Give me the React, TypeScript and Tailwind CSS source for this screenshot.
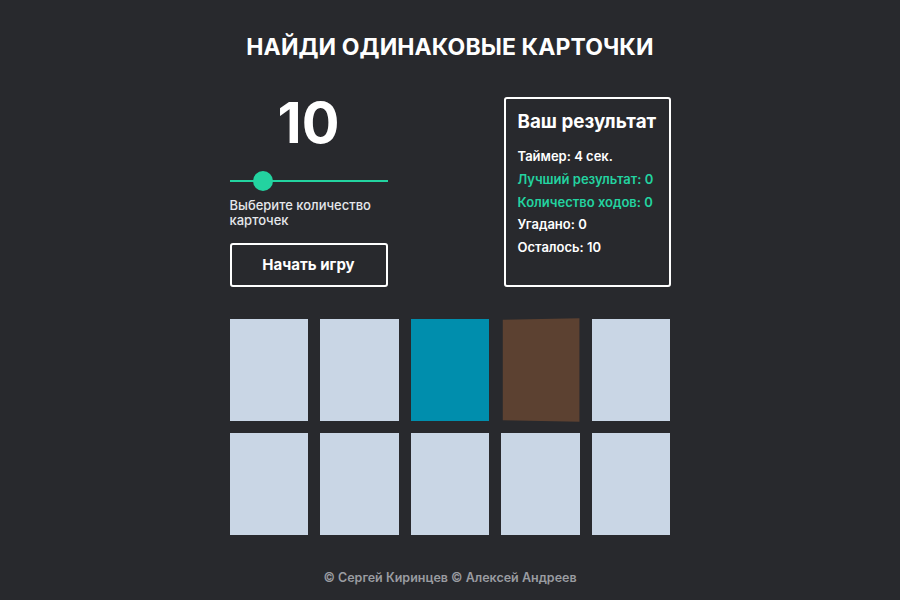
import React from 'react';

const cards = [
  'bg-[#c9d6e5]',
  'bg-[#c9d6e5]',
  'bg-[#008ead]',
  'flip',
  'bg-[#c9d6e5]',
  'bg-[#c9d6e5]',
  'bg-[#c9d6e5]',
  'bg-[#c9d6e5]',
  'bg-[#c9d6e5]',
  'bg-[#c9d6e5]',
];

export default function App() {
  return (
    <div className="min-h-[600px] w-full bg-[#28292d] text-white font-['Inter',sans-serif] flex flex-col items-center">
      <h1 className="mt-[33px] text-[23px] leading-[28px] font-bold tracking-[0.1px]">НАЙДИ ОДИНАКОВЫЕ КАРТОЧКИ</h1>

      <div className="w-[441px] mt-[36px] flex justify-between">
        {/* Settings */}
        <div className="w-[158px] flex flex-col">
          <div className="text-center text-[56px] leading-[60px] font-bold -mt-[4px]">10</div>
          <div className="relative h-[20px] mt-[18px] flex items-center">
            <div className="w-full h-[2px] bg-[#23d3a0]" />
            <div className="absolute left-[23px] top-0 w-[20px] h-[20px] rounded-full bg-[#23d3a0]" />
          </div>
          <p className="mt-[7px] text-[13px] leading-[15px] font-medium text-[#e5e7eb]">Выберите количество карточек</p>
          <button className="mt-[15px] h-[44px] w-full border-2 border-white rounded-[3px] text-[15px] font-bold">
            Начать игру
          </button>
        </div>

        {/* Results */}
        <div className="w-[167px] h-[190px] border-2 border-white rounded-[3px] px-[12px] pt-[11px]">
          <h2 className="text-[18.8px] leading-[24px] font-bold whitespace-nowrap">Ваш результат</h2>
          <ul className="mt-[11px] text-[13px] leading-[22.75px] font-semibold">
            <li>Таймер: 4 сек.</li>
            <li className="text-[#23d3a0]">Лучший результат: 0</li>
            <li className="text-[#23d3a0]">Количество ходов: 0</li>
            <li>Угадано: 0</li>
            <li>Осталось: 10</li>
          </ul>
        </div>
      </div>

      <div className="w-[441px] mt-[32px] grid grid-cols-5 gap-[12px]">
        {cards.map((c, i) =>
          c === 'flip' ? (
            <div key={i} className="h-[102px] [perspective:600px]">
              <div className="w-full h-full bg-[#5c4131] [transform:rotateY(-14deg)]" />
            </div>
          ) : (
            <div key={i} className={`h-[102px] ${c}`} />
          )
        )}
      </div>

      <footer className="mt-[34px] text-[12.5px] font-semibold text-[#9a9ca1]">
        © Сергей Киринцев © Алексей Андреев
      </footer>
    </div>
  );
}
